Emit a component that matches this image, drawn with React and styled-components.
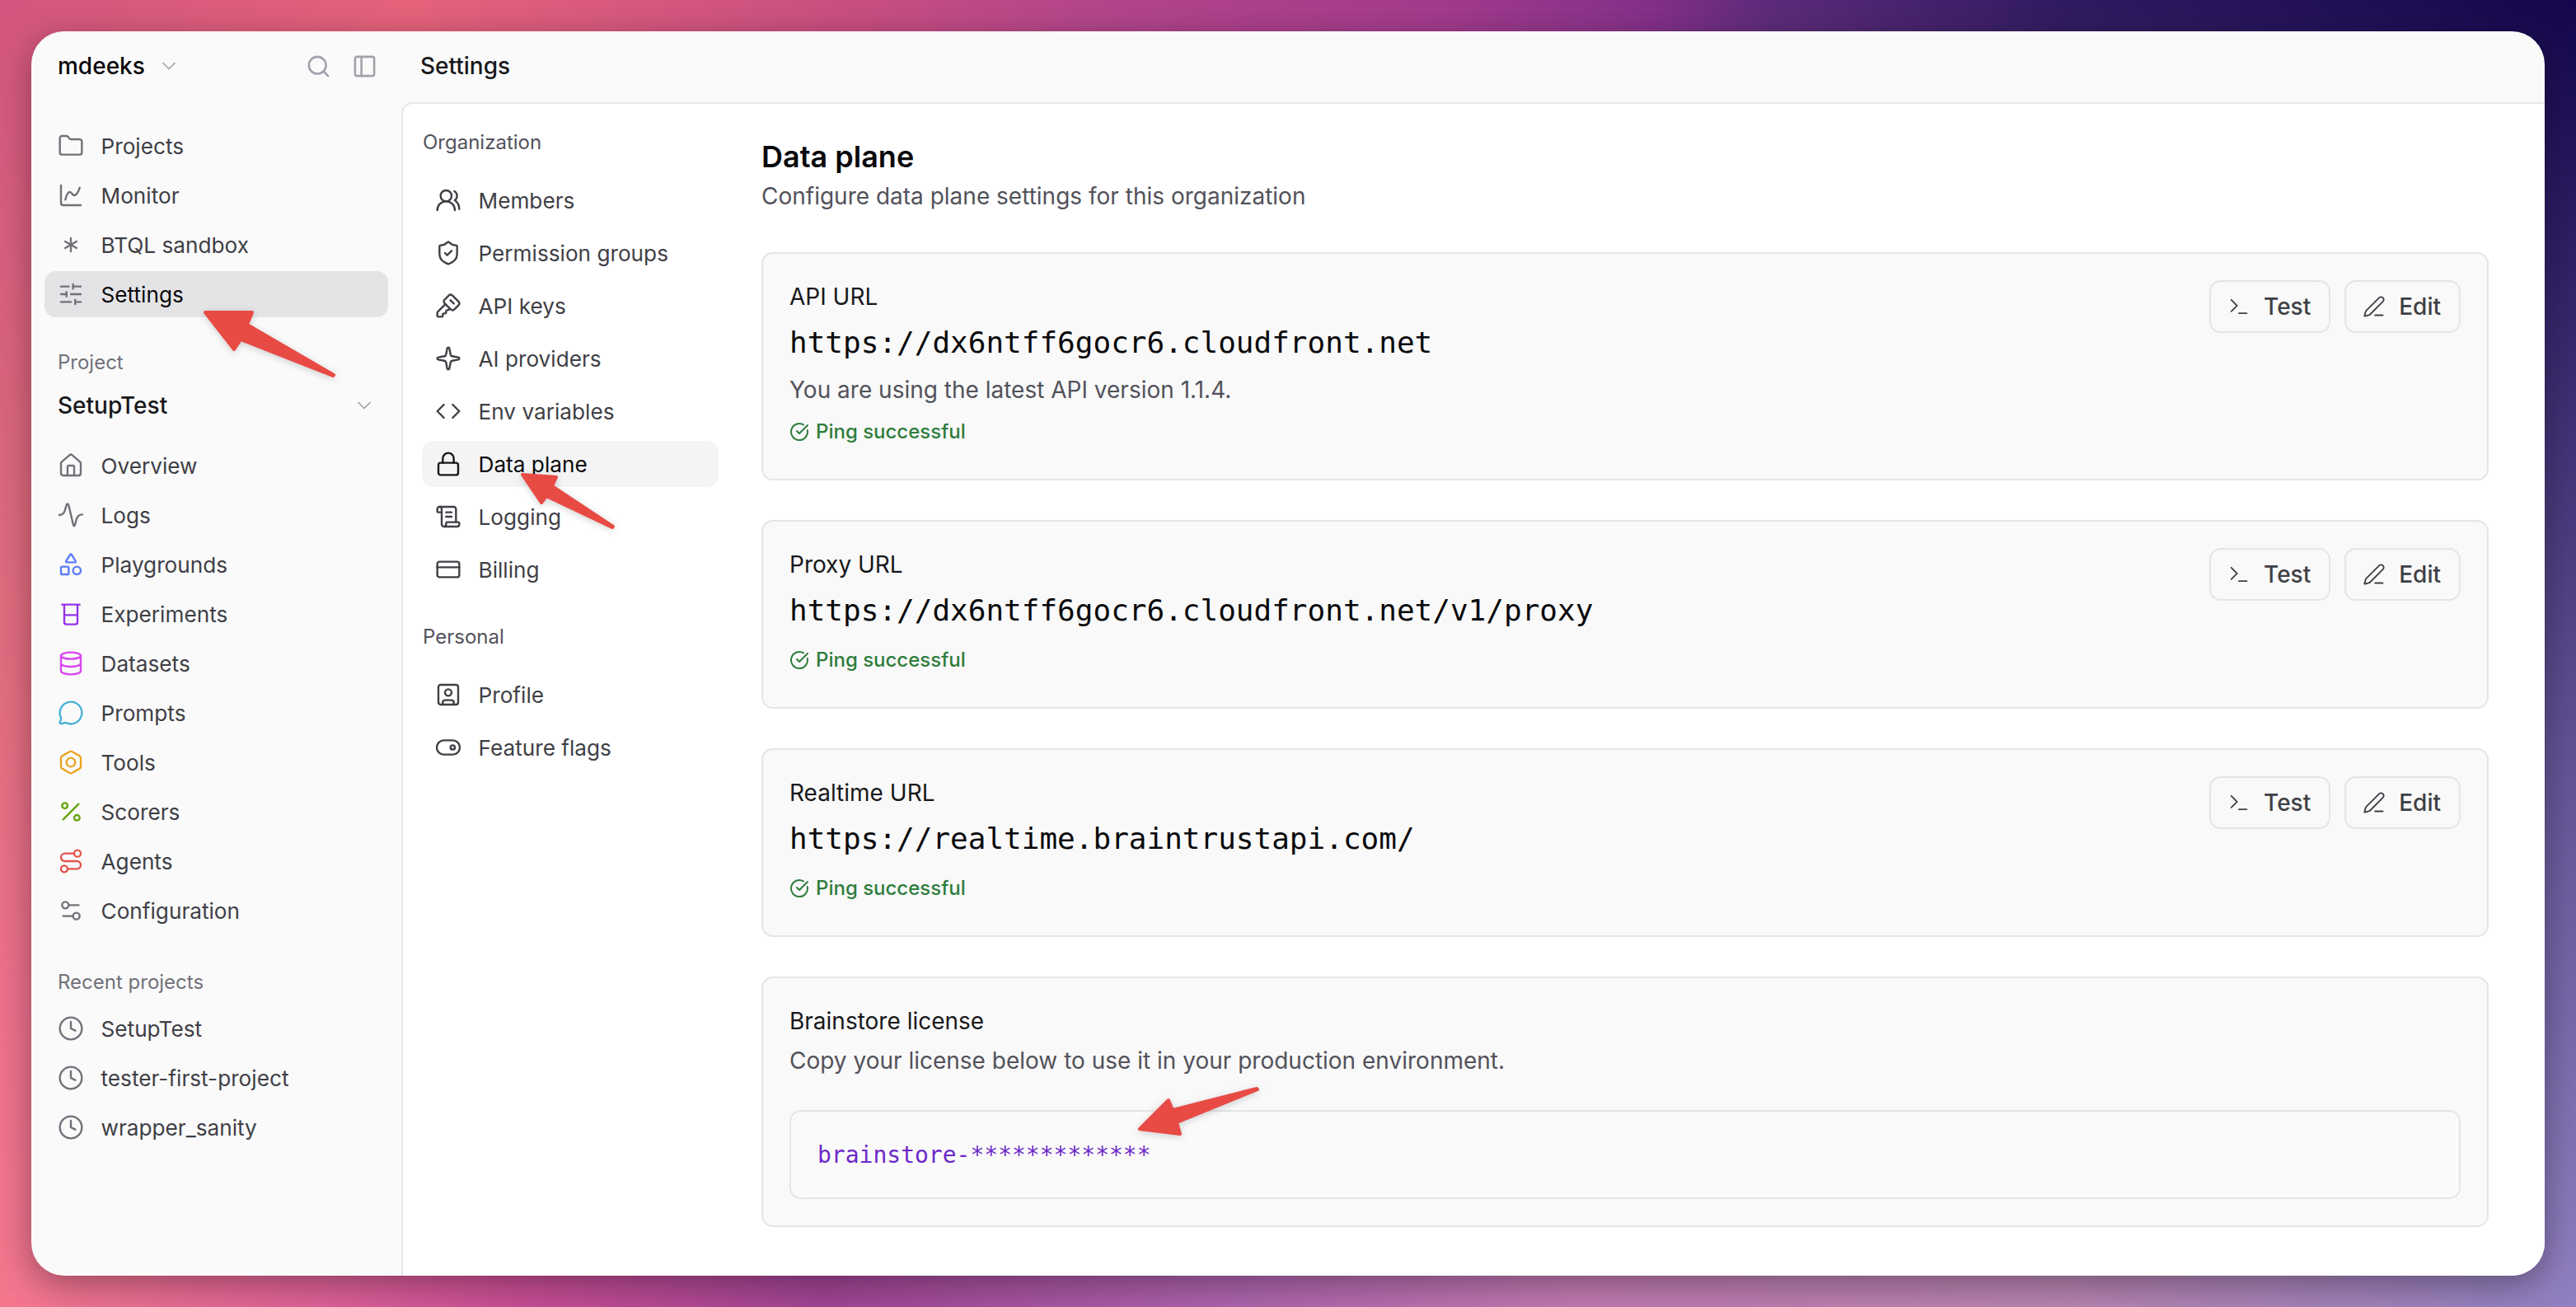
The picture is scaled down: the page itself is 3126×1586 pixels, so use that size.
import React from 'react'
import styled, { createGlobalStyle } from 'styled-components'
import {
  Asterisk, Bolt, ChartSpline, ChevronDown, CircleCheckBig, Clock, Code, CreditCard, Database,
  Folder, House, KeySquare, Lock, MessageCircle, PanelLeft, PenLine, Percent, Route, ScrollText, Search,
  Settings2, Shapes, ShieldCheck, SlidersHorizontal, Sparkle, SquareUser, Terminal, UsersRound
} from 'lucide-react'

const GlobalStyle = createGlobalStyle`
  html, body { margin: 0; padding: 0; }
  body { font-family: Inter, "Liberation Sans", sans-serif; overflow: hidden; }
  * { box-sizing: border-box; }
`

const Page = styled.div`
  position: relative;
  width: 3126px;
  height: 1586px;
  padding: 38px;
  overflow: hidden;
  background:
    radial-gradient(500px 700px at 0% 32%, #e98478 0%, rgba(233, 132, 120, 0) 100%),
    linear-gradient(90deg, #f4788e 0%, #dc6098 13%, #c84e94 20%, #a04494 32%, #ac64ac 48%, #c07ab0 61%, #b884b0 80%, #9080c0 100%);
  &::before {
    content: '';
    position: absolute;
    inset: 0;
    background: linear-gradient(90deg, #d2567e 0%, #e5637a 16%, #c84e82 34%, #b4468a 42%, #a23a8c 56%, #843088 64%, #5a2a78 69%, #301a60 80%, #14064c 100%);
    mask-image: linear-gradient(180deg, #000 0%, rgba(0, 0, 0, 0.35) 60%, transparent 100%);
  }
`

const Window = styled.div`
  position: relative;
  width: 3050px;
  height: 1510px;
  display: grid;
  grid-template-columns: 449px 1fr;
  background: #fafafa;
  border-radius: 40px;
  overflow: hidden;
  box-shadow: 0 10px 40px rgba(0, 0, 0, 0.35);
`

const Sidebar = styled.aside`
  padding: 0 16px;
  display: flex;
  flex-direction: column;
`

const SidebarHead = styled.div`
  height: 84px;
  margin-bottom: 27px;
  padding: 0 13px 0 16px;
  display: flex;
  align-items: center;
`

const OrgName = styled.span`
  font-size: 28px;
  font-weight: 500;
  color: #09090b;
`

const OrgChevron = styled(ChevronDown)`
  margin-left: 15px;
  color: #a1a1aa;
`

const HeadIcons = styled.div`
  margin-left: auto;
  display: flex;
  gap: 25px;
  color: #a1a1aa;
`

const NavList = styled.nav`
  display: flex;
  flex-direction: column;
  gap: 4px;
`

const RecentList = styled(NavList)`
  margin-top: 10px;
`

const NavRow = styled.div`
  height: 56px;
  padding-left: 16px;
  display: flex;
  align-items: center;
  gap: 20.500px;
  border-radius: 14px;
  font-size: 26.200px;
  color: ${p => (p.$active ? '#09090b' : '#3f3f46')};
  background: ${p => (p.$active ? '#e4e4e7' : 'transparent')};
  svg {
    flex: none;
    color: ${p => p.$tint || '#71717a'};
  }
`

const GroupLabel = styled.div`
  margin: ${p => p.$top}px 0 0 16px;
  font-size: 24px;
  line-height: 36px;
  color: #71717a;
`

const ProjectPicker = styled.div`
  height: 44px;
  margin-top: 12px;
  margin-bottom: 23px;
  padding: 0 15px 0 16px;
  display: flex;
  align-items: center;
  justify-content: space-between;
  font-size: 28px;
  font-weight: 500;
  color: #18181b;
  svg {
    color: #a1a1aa;
  }
`

const Column = styled.div`
  min-width: 0;
  display: flex;
  flex-direction: column;
`

const TopBar = styled.header`
  height: 86px;
  padding: 0 0 2px 23px;
  display: flex;
  align-items: center;
  font-size: 28px;
  font-weight: 500;
  color: #18181b;
`

const Panel = styled.main`
  flex: 1;
  display: grid;
  grid-template-columns: 435px 1fr;
  background: #ffffff;
  border-top: 2px solid #e7e7e7;
  border-left: 2px solid #e7e7e7;
  border-top-left-radius: 14px;
`

const SubNav = styled.nav`
  padding: 29px 52px 0 23px;
`

const SubLabel = styled.div`
  margin: ${p => p.$top}px 0 24px 1px;
  font-size: 24px;
  line-height: 36px;
  color: #52525b;
`

const SubList = styled.div`
  display: flex;
  flex-direction: column;
  gap: 8px;
`

const SubRow = styled.div`
  height: 56px;
  padding-left: 16px;
  display: flex;
  align-items: center;
  gap: 20.500px;
  border-radius: 14px;
  font-size: 26.200px;
  color: ${p => (p.$active ? '#09090b' : '#3f3f46')};
  background: ${p => (p.$active ? '#f4f4f5' : 'transparent')};
  svg {
    flex: none;
    color: ${p => (p.$active ? '#18181b' : '#3f3f46')};
  }
`

const Content = styled.section`
  padding: 40px 68px 0 0;
  display: flex;
  flex-direction: column;
`

const Title = styled.h1`
  margin: 0;
  font-size: 36px;
  line-height: 48px;
  font-weight: 600;
  color: #09090b;
`

const Subtitle = styled.p`
  margin: 4px 0 48px;
  font-size: 28px;
  line-height: 40px;
  color: #52525b;
`

const CardStack = styled.div`
  display: flex;
  flex-direction: column;
  gap: 48px;
`

const Card = styled.article`
  position: relative;
  height: ${p => p.$height}px;
  padding: 32px;
  background: #f9f9f9;
  border: 2px solid #e5e5e5;
  border-radius: 14px;
`

const CardActions = styled.div`
  position: absolute;
  top: 32px;
  right: 32px;
  display: flex;
  gap: 17px;
`

const ActionButton = styled.div`
  height: 64px;
  padding: 0 22px 0 20px;
  display: flex;
  align-items: center;
  gap: 16px;
  border: 2px solid #e5e5e5;
  border-radius: 14px;
  font-size: 28px;
  font-weight: 500;
  color: #3f3f46;
`

const CardLabel = styled.div`
  font-size: 28px;
  line-height: 40px;
  color: #18181b;
`

const Url = styled.div`
  margin-top: 14px;
  font-family: "DejaVu Sans Mono", "Liberation Mono", monospace;
  font-size: 36px;
  line-height: 44px;
  color: #09090b;
`

const Note = styled.p`
  margin: ${p => p.$top}px 0 0;
  font-size: 28px;
  line-height: 40px;
  color: #52525b;
`

const Ping = styled.div`
  margin-top: ${p => p.$top}px;
  display: flex;
  align-items: center;
  gap: 8px;
  font-size: 24px;
  line-height: 32px;
  font-weight: 500;
  color: #2e7d3c;
`

const LicenseBox = styled.div`
  height: 108px;
  margin-top: 40px;
  padding: 0 32px;
  display: flex;
  align-items: center;
  border: 2px solid #e5e5e5;
  border-radius: 14px;
  background: #fafafa;
  font-family: "DejaVu Sans Mono", "Liberation Mono", monospace;
  font-size: 28px;
  color: #6d28c9;
`

const Annotations = styled.svg`
  position: absolute;
  inset: 0;
  pointer-events: none;
  filter: drop-shadow(0 2px 4px rgba(0, 0, 0, 0.18));
`

const ExperimentIcon = ({ size = 32, strokeWidth = 1.8 }) => (
  <svg width={size} height={size} viewBox="0 0 24 24" fill="none" stroke="currentColor" strokeWidth={strokeWidth} strokeLinecap="round" strokeLinejoin="round">
    <path d="M4 3.500h16M6 3.500v16a2 2 0 0 0 2 2h8a2 2 0 0 0 2-2v-16M6 13h12" />
  </svg>
)

const LogsIcon = ({ size = 32, strokeWidth = 1.8 }) => (
  <svg width={size} height={size} viewBox="0 0 24 24" fill="none" stroke="currentColor" strokeWidth={strokeWidth} strokeLinecap="round" strokeLinejoin="round">
    <path d="M1.500 12C4 12 5.500 11 6.500 8L8 3C8.500 1.500 9.500 1.500 10 3L14 20C14.500 22.500 15.500 22.500 16 20L17 16C18 12.500 19.500 11.500 22.500 11.500" />
  </svg>
)

const FlagIcon = ({ size = 32, strokeWidth = 1.8 }) => (
  <svg width={size} height={size} viewBox="0 0 24 24" fill="none" stroke="currentColor" strokeWidth={strokeWidth} strokeLinecap="round" strokeLinejoin="round">
    <rect x="1.500" y="5.500" width="21" height="13" rx="6.500" />
    <circle cx="16" cy="12" r="2" />
  </svg>
)

const workspace = [
  { label: 'Projects', Icon: Folder },
  { label: 'Monitor', Icon: ChartSpline },
  { label: 'BTQL sandbox', Icon: Asterisk },
  { label: 'Settings', Icon: SlidersHorizontal, active: true }
]

const project = [
  { label: 'Overview', Icon: House },
  { label: 'Logs', Icon: LogsIcon },
  { label: 'Playgrounds', Icon: Shapes, tint: '#5b7cfa' },
  { label: 'Experiments', Icon: ExperimentIcon, tint: '#9333ea' },
  { label: 'Datasets', Icon: Database, tint: '#d946ef' },
  { label: 'Prompts', Icon: MessageCircle, tint: '#48b0d8' },
  { label: 'Tools', Icon: Bolt, tint: '#eba524' },
  { label: 'Scorers', Icon: Percent, tint: '#65a30d' },
  { label: 'Agents', Icon: Route, tint: '#e2554c' },
  { label: 'Configuration', Icon: Settings2 }
]

const recent = ['SetupTest', 'tester-first-project', 'wrapper_sanity']

const organization = [
  { label: 'Members', Icon: UsersRound },
  { label: 'Permission groups', Icon: ShieldCheck },
  { label: 'API keys', Icon: KeySquare },
  { label: 'AI providers', Icon: Sparkle },
  { label: 'Env variables', Icon: Code },
  { label: 'Data plane', Icon: Lock, active: true },
  { label: 'Logging', Icon: ScrollText },
  { label: 'Billing', Icon: CreditCard }
]

const personal = [
  { label: 'Profile', Icon: SquareUser },
  { label: 'Feature flags', Icon: FlagIcon }
]

const Actions = () => (
  <CardActions>
    <ActionButton>
      <Terminal size={28} strokeWidth={1.6} />
      Test
    </ActionButton>
    <ActionButton>
      <PenLine size={28} strokeWidth={1.6} />
      Edit
    </ActionButton>
  </CardActions>
)

const PingOk = ({ top }) => (
  <Ping $top={top}>
    <CircleCheckBig size={24} strokeWidth={2} />
    Ping successful
  </Ping>
)

const App = () => (
  <Page>
    <GlobalStyle />
    <Window>
      <Sidebar>
        <SidebarHead>
          <OrgName>mdeeks</OrgName>
          <OrgChevron size={28} strokeWidth={1.5} />
          <HeadIcons>
            <Search size={31} />
            <PanelLeft size={31} />
          </HeadIcons>
        </SidebarHead>

        <NavList>
          {workspace.map(({ label, Icon, active }) => (
            <NavRow key={label} $active={active}>
              <Icon size={32} strokeWidth={1.8} />
              {label}
            </NavRow>
          ))}
        </NavList>

        <GroupLabel $top={37}>Project</GroupLabel>
        <ProjectPicker>
          SetupTest
          <ChevronDown size={28} strokeWidth={1.5} />
        </ProjectPicker>

        <NavList>
          {project.map(({ label, Icon, tint }) => (
            <NavRow key={label} $tint={tint}>
              <Icon size={32} strokeWidth={1.8} />
              {label}
            </NavRow>
          ))}
        </NavList>

        <GroupLabel $top={41}>Recent projects</GroupLabel>
        <RecentList>
          {recent.map(label => (
            <NavRow key={label}>
              <Clock size={32} strokeWidth={1.8} />
              {label}
            </NavRow>
          ))}
        </RecentList>
      </Sidebar>

      <Column>
        <TopBar>Settings</TopBar>
        <Panel>
          <SubNav>
            <SubLabel $top={0}>Organization</SubLabel>
            <SubList>
              {organization.map(({ label, Icon, active }) => (
                <SubRow key={label} $active={active}>
                  <Icon size={32} strokeWidth={1.8} />
                  {label}
                </SubRow>
              ))}
            </SubList>
            <SubLabel $top={36}>Personal</SubLabel>
            <SubList>
              {personal.map(({ label, Icon }) => (
                <SubRow key={label}>
                  <Icon size={32} strokeWidth={1.8} />
                  {label}
                </SubRow>
              ))}
            </SubList>
          </SubNav>

          <Content>
            <Title>Data plane</Title>
            <Subtitle>Configure data plane settings for this organization</Subtitle>
            <CardStack>
              <Card $height={277}>
                <Actions />
                <CardLabel>API URL</CardLabel>
                <Url>https://dx6ntff6gocr6.cloudfront.net</Url>
                <Note $top={15}>You are using the latest API version 1.1.4.</Note>
                <PingOk top={15} />
              </Card>
              <Card $height={229}>
                <Actions />
                <CardLabel>Proxy URL</CardLabel>
                <Url>https://dx6ntff6gocr6.cloudfront.net/v1/proxy</Url>
                <PingOk top={22} />
              </Card>
              <Card $height={229}>
                <Actions />
                <CardLabel>Realtime URL</CardLabel>
                <Url>https://realtime.braintrustapi.com/</Url>
                <PingOk top={22} />
              </Card>
              <Card $height={304}>
                <CardLabel>Brainstore license</CardLabel>
                <Note $top={8}>Copy your license below to use it in your production environment.</Note>
                <LicenseBox>brainstore-*************</LicenseBox>
              </Card>
            </CardStack>
          </Content>
        </Panel>
      </Column>
    </Window>

    <Annotations width="3126" height="1586" viewBox="0 0 3126 1586" fill="#e84a44" stroke="#e84a44" strokeWidth="4" strokeLinejoin="round">
      <path d="M249 379 L306 379 L300 394 L405 455 L404 456 L292 412 L284 424 Z" />
      <path d="M634 576 L675 579 L670 590 L744 639 L743 640 L663 602 L657 610 Z" />
      <path d="M1383 1370 L1418 1335 L1423 1347 L1525 1321 L1526 1322 L1428 1362 L1432 1376 Z" />
    </Annotations>
  </Page>
)

export default App
